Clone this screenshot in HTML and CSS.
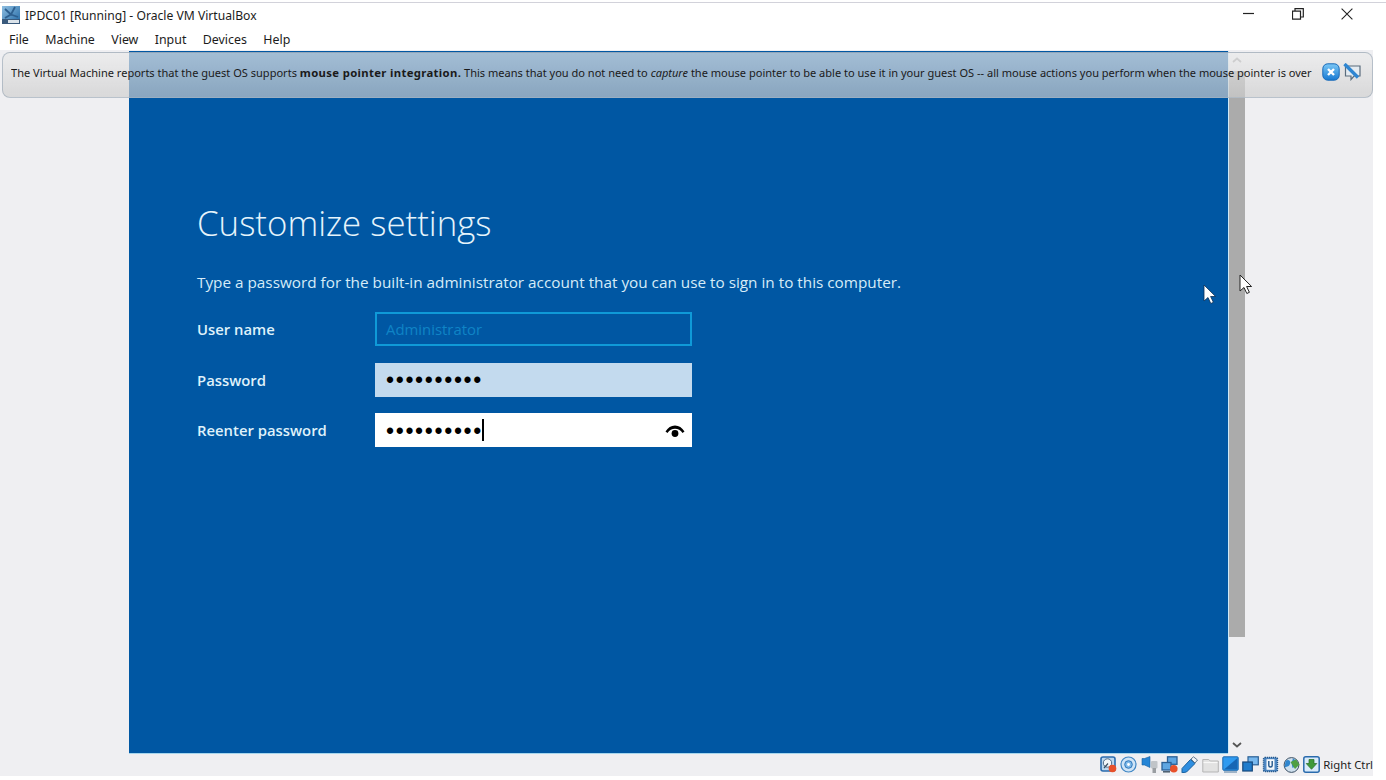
FILE: index.html
```html
<!DOCTYPE html>
<html lang="en">
<head>
<meta charset="utf-8">
<title>IPDC01 [Running] - Oracle VM VirtualBox</title>
<link rel="stylesheet" href="styles.css">
</head>
<body>
<div class="window">
  <header class="titlebar">
    <svg class="app-logo" viewBox="0 0 18 18" aria-hidden="true">
      <defs><linearGradient id="lg" x1="0" y1="0" x2="1" y2="1"><stop offset="0" stop-color="#8fbfe2"/><stop offset="1" stop-color="#1f66a3"/></linearGradient></defs>
      <rect x="0" y="0" width="18" height="18" fill="url(#lg)"/>
      <path d="M3 3 9 8.500 13 1M9 8.500 3 12M9 8.500 16 11" stroke="#2d5f8f" stroke-width="1.800" fill="none"/>
      <rect x="0" y="13" width="18" height="5" fill="#3a5a7c"/>
      <rect x="6" y="14" width="11" height="3" fill="#dbe3ea"/>
    </svg>
    <span class="app-title">IPDC01 [Running] - Oracle VM VirtualBox</span>
    <div class="win-controls">
      <svg class="win-btn" viewBox="0 0 12 12" aria-hidden="true"><path d="M0 5.500H11" stroke="#222" stroke-width="1.200"/></svg>
      <svg class="win-btn" viewBox="0 0 12 12" aria-hidden="true"><path d="M.5 3.200h8v8h-8zM3 3V.7h8.300V9H9" stroke="#222" stroke-width="1.200" fill="none"/></svg>
      <svg class="win-btn" viewBox="0 0 12 12" aria-hidden="true"><path d="M.6.6 11.400 11.400M11.400.6.6 11.400" stroke="#222" stroke-width="1.100"/></svg>
    </div>
  </header>
  <nav class="menubar">
    <span>File</span><span>Machine</span><span>View</span><span>Input</span><span>Devices</span><span>Help</span>
  </nav>
  <main class="client">
    <div class="viewport">
      <section class="screen">
        <h1 class="heading">Customize settings</h1>
        <p class="intro">Type a password for the built-in administrator account that you can use to sign in to this computer.</p>
        <div class="form">
          <div class="row">
            <label class="label">User name</label>
            <div class="field field-disabled">Administrator</div>
          </div>
          <div class="row">
            <label class="label">Password</label>
            <div class="field field-idle"><span class="dots">••••••••••</span></div>
          </div>
          <div class="row">
            <label class="label">Reenter password</label>
            <div class="field field-active">
              <span class="dots">••••••••••</span><span class="caret"></span>
              <svg class="eye" viewBox="0 0 20 13" aria-hidden="true">
                <path d="M.5 6.500C3 2.500 6 .5 10 .5s7 2 9.500 6l-2 1.500C15.500 5 13 3.800 10 3.800S4.500 5 2.500 8z" fill="#000"/>
                <circle cx="10" cy="8.500" r="3.400" fill="#000"/>
              </svg>
            </div>
          </div>
        </div>
      </section>
      <aside class="scrollbar">
        <svg class="chev" viewBox="0 0 10 6" aria-hidden="true"><path d="M1 5 5 1.500 9 5" stroke="#9a9a9c" stroke-width="1.800" fill="none"/></svg>
        <div class="thumb"></div>
        <svg class="chev chev-down" viewBox="0 0 10 6" aria-hidden="true"><path d="M1 1 5 4.500 9 1" stroke="#555" stroke-width="1.800" fill="none"/></svg>
      </aside>
    </div>
    <footer class="statusbar">
      <svg class="st" viewBox="0 0 17 17"><rect x="1" y="1" width="14" height="14" rx="2" fill="#bcd8f0" stroke="#2a6bad" stroke-width="1.600"/><circle cx="7.500" cy="7" r="4.200" fill="#f2f6fa" stroke="#4f6a85"/><path d="M4 12 8 7.500" stroke="#3a4e62" stroke-width="1.200"/><circle cx="12.500" cy="12.500" r="3.800" fill="#e8502a"/></svg>
      <svg class="st" viewBox="0 0 17 17"><circle cx="8.500" cy="8.500" r="7.500" fill="#cfe4f6" stroke="#3f86c4" stroke-width="1.200"/><circle cx="8.500" cy="8.500" r="3.800" fill="#7db8e8" stroke="#2f78bc"/><circle cx="8.500" cy="8.500" r="1.400" fill="#fff"/></svg>
      <svg class="st" viewBox="0 0 17 17"><path d="M1 2.500h2.500L9 .5v11L3.500 9H1z" fill="#2585d6" stroke="#17609f" stroke-width=".6"/><rect x="10" y="5" width="6.500" height="7.500" rx="1" fill="#c0c4c8"/><rect x="11.500" y="12" width="3.500" height="5" fill="#9a9ea2"/></svg>
      <svg class="st" viewBox="0 0 17 17"><rect x="6.500" y=".8" width="9.500" height="7.500" fill="#5ea6e2" stroke="#2a5f95" stroke-width="1.300"/><rect x="1" y="6.500" width="9" height="7.500" fill="#5ea6e2" stroke="#2a5f95" stroke-width="1.300"/><path d="M2 15.800h7" stroke="#46596c" stroke-width="1.500"/><circle cx="12.800" cy="12.800" r="3.800" fill="#e8502a"/></svg>
      <svg class="st" viewBox="0 0 17 17"><path d="M1 12.500 9.500 3.500l4.500 4-8.500 8.500-4.500 .8z" fill="#2f8ee0" stroke="#17609f"/><path d="M10 3 12.500 .8 16.500 4l-2.500 3z" fill="#f2f4f6" stroke="#4f6a85" stroke-width=".9"/></svg>
      <svg class="st" viewBox="0 0 17 17"><path d="M.8 3.500h6l1.500 1.500h8v11H.8z" fill="#e2e2e2" stroke="#b5b5b5"/><path d="M1.500 6.500h14" stroke="#f8f8f8" stroke-width="1.200"/></svg>
      <svg class="st" viewBox="0 0 17 17"><rect x=".8" y=".8" width="15.400" height="13.500" rx="1" fill="#2f9af0" stroke="#1c69b0"/><path d="M2 13.500 15.500 2v11.500z" fill="#1766b4"/><path d="M2 16h13" stroke="#7d9ab5" stroke-width="1.400"/></svg>
      <svg class="st" viewBox="0 0 17 17"><rect x="6" y=".8" width="10.300" height="8" fill="#78b8ee" stroke="#2a5f95" stroke-width="1.200"/><rect x=".8" y="6" width="9.500" height="9" fill="#1f7ccc" stroke="#17497c" stroke-width="1.200"/></svg>
      <svg class="st" viewBox="0 0 17 17"><rect x="1.500" y="1.500" width="14" height="14" rx="1.500" fill="#4f88c4" stroke="#23578c" stroke-dasharray="1.200 .8" stroke-width="1.400"/><rect x="4.500" y="3.200" width="8" height="10.600" fill="#f4f7fb"/><path d="M6.800 5v4.500c0 2 3.400 2 3.400 0V5" stroke="#23578c" stroke-width="1.400" fill="none"/></svg>
      <svg class="st" viewBox="0 0 17 17"><circle cx="8.500" cy="9" r="7.400" fill="#cfe0ee" stroke="#3a4e62"/><path d="M2.500 5c3-2.500 5.500-.5 4.500 3s-4 2-5.500 4zM10 2.500l4 2.500-1 5-3.500 2-1-5z" fill="#2f86cf"/><path d="M7.500 6l5.500-2.500 3.500 5-4.500 4.500z" fill="#4f9f42"/></svg>
      <svg class="st" viewBox="0 0 17 17"><rect x=".8" y=".8" width="15.400" height="15.400" rx="2" fill="#d8eafa" stroke="#2a6bad" stroke-width="1.500"/><path d="M6 3.500h5v4h2.800l-5.300 5.800L3.200 7.500H6z" fill="#3f9a3a" stroke="#256b22" stroke-width=".7"/></svg>
      <span class="hostkey">Right Ctrl</span>
    </footer>
    <div class="notice">
      <p class="notice-text">The Virtual Machine reports that the guest OS supports <b>mouse pointer integration.</b> This means that you do not need to <i>capture</i> the mouse pointer to be able to use it in your guest OS -- all mouse actions you perform when the mouse pointer is over</p>
      <svg class="notice-btn" viewBox="0 0 18 18" aria-hidden="true"><defs><linearGradient id="nb" x1="0" y1="0" x2="0" y2="1"><stop offset="0" stop-color="#7cc8f6"/><stop offset="1" stop-color="#1678d2"/></linearGradient></defs><rect x=".8" y=".8" width="16.400" height="16.400" rx="5" fill="url(#nb)" stroke="#1a6ab8"/><path d="M6 6 12 12M12 6 6 12" stroke="#fff" stroke-width="2.400"/></svg>
      <svg class="notice-btn" viewBox="0 0 18 18" aria-hidden="true"><path d="M2.500 3h14.500v10h-6l-3 3.500V13H2.500z" fill="#e4ebf1" stroke="#5a6c7d" stroke-width="1.200"/><path d="M1.500 1 15 14.500" stroke="#2f86d2" stroke-width="3.400"/></svg>
    </div>
    <svg class="cursor cursor-guest" viewBox="0 0 14 22" aria-hidden="true"><path d="M1 1v16l4-3.500 2.800 6 2.600-1.200-2.800-5.800h5z" fill="#fff" stroke="#0a2f55" stroke-width=".8"/></svg>
    <svg class="cursor cursor-host" viewBox="0 0 14 22" aria-hidden="true"><path d="M1 1v16l4-3.500 2.800 6 2.600-1.200-2.800-5.800h5z" fill="#fff" stroke="#222" stroke-width="1"/></svg>
  </main>
</div>
</body>
</html>
```
FILE: styles.css
```css
* { box-sizing: border-box; }
html, body { margin: 0; height: 100%; background: #fff; overflow: hidden; }
.window {
  width: 1386px;
  height: 780px;
  display: flex;
  flex-direction: column;
  padding-top: 2px;
  font-family: "Noto Sans", "Open Sans", sans-serif;
  color: #1c1c1c;
}
.titlebar {
  height: 25px;
  flex: none;
  display: flex;
  align-items: center;
  border-top: 1px solid #d2d2da;
  padding-left: 2px;
}
.app-logo { width: 18px; height: 18px; flex: none; }
.app-title { margin-left: 5px; font-size: 12.150px; }
.win-controls {
  margin-left: auto;
  display: flex;
  gap: 37px;
  padding-right: 33px;
  margin-top: -2px;
}
.win-btn { width: 12px; height: 12px; }
.menubar {
  height: 23px;
  flex: none;
  display: flex;
  align-items: center;
  gap: 16.400px;
  padding: 1px 0 0 9px;
  font-size: 12.400px;
}
.client {
  position: relative;
  width: 1373px;
  height: 726px;
  flex: none;
  background: #efeff2;
  display: flex;
  flex-direction: column;
}
.viewport {
  height: 703px;
  flex: none;
  display: flex;
  padding: 1px 0 0 129px;
}
.screen {
  width: 1099px;
  background: #0057a3;
  box-shadow: 1px 0 0 #cfe9f6, 0 1px 0 #a5d6ee;
  padding: 149px 0 0 68px;
  color: #fff;
  font-family: "Open Sans", "Noto Sans", sans-serif;
}
.heading {
  margin: 0;
  font-weight: 300;
  font-size: 34.800px;
  line-height: 46px;
  color: #e6f4fb;
}
.intro {
  margin: 25px 0 0;
  font-size: 15.300px;
  line-height: 22px;
  color: #d6ecf8;
}
.form {
  margin-top: 19px;
  display: flex;
  flex-direction: column;
  gap: 16.500px;
}
.row { display: flex; align-items: center; }
.label {
  width: 178px;
  flex: none;
  font-size: 14.850px;
  font-weight: 600;
  color: #dff1fa;
}
.field {
  position: relative;
  width: 317px;
  height: 34px;
  display: flex;
  align-items: center;
  padding-left: 11px;
  color: #000;
}
.field-disabled {
  border: 2px solid #0f9ad8;
  padding-left: 9px;
  color: #0f84c6;
  font-size: 14.900px;
}
.field-idle { background: #c3daee; }
.field-active { background: #fff; }
.dots {
  font-family: "Liberation Sans", sans-serif;
  font-size: 23px;
  letter-spacing: 1.650px;
  line-height: 34px;
  padding-top: 1px;
}
.caret {
  width: 2px;
  height: 22px;
  margin-left: -1px;
  background: #000;
}
.eye {
  position: absolute;
  right: 7px;
  top: 12px;
  width: 20px;
  height: 13px;
}
.scrollbar {
  width: 16px;
  margin-left: 1px;
  display: flex;
  flex-direction: column;
  align-items: center;
}
.chev { width: 10px; height: 6px; flex: none; margin-top: 6px; }
.chev-down { margin: auto 0 5px; }
.thumb {
  width: 16px;
  height: 566px;
  margin-top: 8px;
  background: #ababab;
}
.statusbar {
  height: 23px;
  flex: none;
  display: flex;
  align-items: center;
  justify-content: flex-end;
  gap: 3.300px;
  font-size: 11.300px;
}
.st { width: 17px; height: 17px; flex: none; }
.hostkey { white-space: nowrap; }
.notice {
  position: absolute;
  left: 2px;
  top: 2px;
  width: 1371px;
  height: 46px;
  display: flex;
  align-items: center;
  border: 1px solid rgba(150, 165, 180, 0.6);
  border-radius: 8px;
  background: linear-gradient(to bottom, rgba(235, 235, 235, 0.69), rgba(205, 205, 205, 0.67));
  padding: 0 12px 6px 8px;
}
.notice-text {
  margin: 0;
  flex: none;
  width: 1311px;
  white-space: nowrap;
  overflow: hidden;
  font-family: "Noto Sans", sans-serif;
  font-size: 11.040px;
  color: #1a1a1a;
}
.notice-text b { font-weight: 700; font-size: 11.300px; letter-spacing: 0.350px; }
.notice-btn { width: 18px; height: 18px; flex: none; margin-right: 3px; }
.cursor { position: absolute; width: 14px; height: 22px; }
.cursor-guest { left: 1203px; top: 234px; }
.cursor-host { left: 1239px; top: 224px; }
```
